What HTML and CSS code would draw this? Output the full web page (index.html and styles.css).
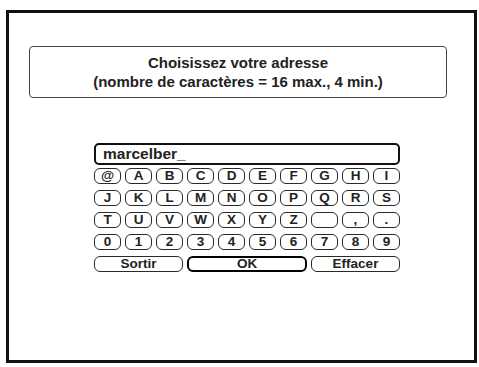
FILE: index.html
```html
<!DOCTYPE html>
<html lang="fr">
<head>
<meta charset="utf-8">
<link rel="stylesheet" href="styles.css">
</head>
<body>
<div class="frame">
  <div class="title">
    <div>Choisissez votre adresse</div>
    <div>(nombre de caractères = 16 max., 4 min.)</div>
  </div>
  <div class="keyboard">
    <div class="field">marcelber_</div>
    <div class="keys">
      <div class="key">@</div><div class="key">A</div><div class="key">B</div><div class="key">C</div><div class="key">D</div><div class="key">E</div><div class="key">F</div><div class="key">G</div><div class="key">H</div><div class="key">I</div>
      <div class="key">J</div><div class="key">K</div><div class="key">L</div><div class="key">M</div><div class="key">N</div><div class="key">O</div><div class="key">P</div><div class="key">Q</div><div class="key">R</div><div class="key">S</div>
      <div class="key">T</div><div class="key">U</div><div class="key">V</div><div class="key">W</div><div class="key">X</div><div class="key">Y</div><div class="key">Z</div><div class="key"></div><div class="key">,</div><div class="key">.</div>
      <div class="key">0</div><div class="key">1</div><div class="key">2</div><div class="key">3</div><div class="key">4</div><div class="key">5</div><div class="key">6</div><div class="key">7</div><div class="key">8</div><div class="key">9</div>
      <div class="key wide3">Sortir</div><div class="key wide4 focus">OK</div><div class="key wide3">Effacer</div>
    </div>
  </div>
</div>
</body>
</html>
```
FILE: styles.css
```css
html, body { margin: 0; padding: 0; background: #fff; }
body { font-family: "Liberation Sans", Arial, sans-serif; color: #222; }
.frame {
  box-sizing: border-box;
  margin: 10px 0 0 6px;
  width: 471px;
  height: 353px;
  border: 3px solid #111;
  padding-top: 33px;
}
.title {
  box-sizing: border-box;
  margin: 0 27px 0 20px;
  height: 52px;
  border: 1px solid #444;
  border-radius: 4px;
  text-align: center;
  font-weight: bold;
  font-size: 15px;
  line-height: 19px;
  padding-top: 6px;
}
.keyboard {
  margin: 45px 0 0 85px;
  width: 306px;
}
.field {
  box-sizing: border-box;
  height: 22px;
  border: 2.5px solid #111;
  border-radius: 5px;
  font-weight: bold;
  font-size: 15.5px;
  line-height: 17px;
  padding-left: 7px;
}
.keys {
  margin-top: 3px;
  display: grid;
  grid-template-columns: repeat(10, 27px);
  column-gap: 4px;
  row-gap: 6px;
}
.key {
  box-sizing: border-box;
  height: 16px;
  border: 1.8px solid #2a2a2a;
  border-radius: 6px;
  font-weight: bold;
  font-size: 13.5px;
  line-height: 13px;
  text-align: center;
}
.wide3 { grid-column: span 3; }
.wide4 { grid-column: span 4; }
.focus { border: 2.5px solid #000; line-height: 12px; }
```
